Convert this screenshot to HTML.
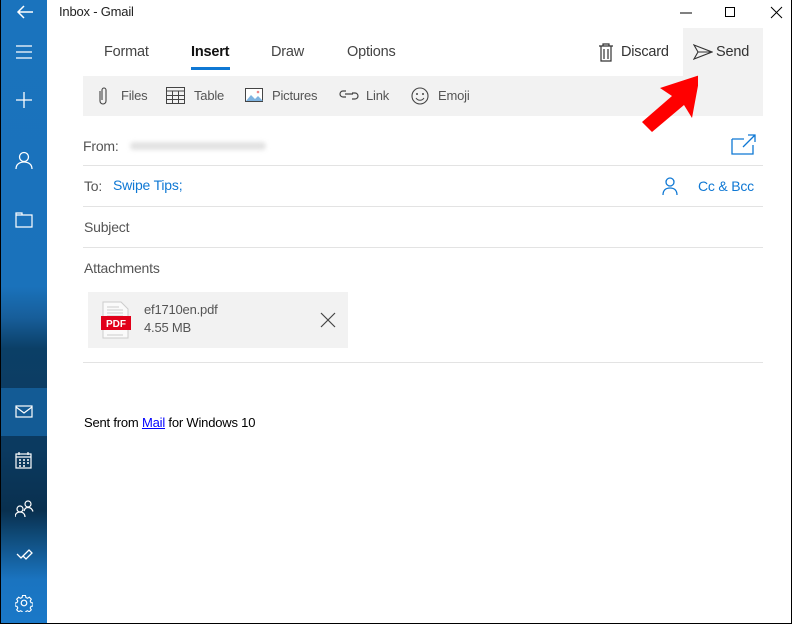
<!DOCTYPE html>
<html><head><meta charset="utf-8"><style>
*{margin:0;padding:0;box-sizing:border-box}
body{width:792px;height:624px;overflow:hidden;background:#fff;font-family:"Segoe UI","Liberation Sans",sans-serif;position:relative}
.side{position:absolute;left:1px;top:0;width:46px;height:623px;background:linear-gradient(180deg,#1a73bd 0%,#1a72bb 46%,#175e9a 51%,#0b3f66 56%,#0c3c63 64%,#0b3a60 72%,#09304f 82%,#0f4a78 86%,#1a74c0 93%,#1a78c8 100%)}
.side .sel{position:absolute;left:0;top:388px;width:46px;height:48px;background:#135b95}
.ic{position:absolute;left:14px}
.a{position:absolute;white-space:nowrap;font-size:14px;color:#222;letter-spacing:-0.2px}
.g{color:#555}
.tab{position:absolute;top:44px;font-size:14.5px;color:#444;letter-spacing:-0.2px}
.bar{position:absolute;left:83px;top:76px;width:680px;height:40px;background:#f2f2f2}
.line{position:absolute;left:83px;width:680px;height:1px;background:#e3e3e3}
.blue{color:#0f78d4}
</style></head><body>
<div style="position:absolute;left:0;top:0;width:1px;height:624px;background:#000"></div>
<div style="position:absolute;right:0;top:0;width:1px;height:624px;background:#000"></div>
<div style="position:absolute;left:0;bottom:0;width:792px;height:1px;background:#000"></div>
<div class="side"><div class="sel"></div>
<svg class="ic" style="top:3px" width="20" height="18" viewBox="0 0 20 18"><path d="M18 9H3M9 3L3 9l6 6" stroke="#fff" stroke-width="1.5" fill="none"/></svg>
<svg class="ic" style="top:44px" width="18" height="16"><path d="M1 2h16M1 8h16M1 14h16" stroke="#fff" stroke-width="1.3"/></svg>
<svg class="ic" style="top:91px" width="18" height="18"><path d="M9 1v16M1 9h16" stroke="#fff" stroke-width="1.3"/></svg>
<svg class="ic" style="top:151px" width="18" height="18"><circle cx="9" cy="6" r="4.5" stroke="#fff" stroke-width="1.3" fill="none"/><path d="M1 18c0-5 4-7 8-7s8 2 8 7" stroke="#fff" stroke-width="1.3" fill="none"/></svg>
<svg class="ic" style="top:212px" width="18" height="16"><path d="M1 1h6v2H1zM1 3h16v12H1z" stroke="#fff" stroke-width="1.2" fill="none"/></svg>
<svg class="ic" style="top:405px" width="18" height="14"><rect x="1" y="1" width="16" height="11" stroke="#fff" stroke-width="1.2" fill="none"/><path d="M1 2l8 6 8-6" stroke="#fff" stroke-width="1.2" fill="none"/></svg>
<svg class="ic" style="top:451px" width="18" height="18"><rect x="1" y="3" width="15" height="14" stroke="#fff" stroke-width="1.2" fill="none"/><path d="M1 6h15M4 1v3M13 1v3" stroke="#fff" stroke-width="1.2"/><path d="M4 9h2M8 9h2M12 9h2M4 12h2M8 12h2M12 12h2M4 15h2M8 15h2" stroke="#fff" stroke-width="1.5"/></svg>
<svg class="ic" style="top:500px" width="20" height="18"><circle cx="5" cy="9" r="3" stroke="#fff" stroke-width="1.2" fill="none"/><path d="M0 17c0-3 2-5 5-5s5 2 5 5" stroke="#fff" stroke-width="1.2" fill="none"/><circle cx="13" cy="4" r="3" stroke="#fff" stroke-width="1.2" fill="none"/><path d="M9 11c1-3 2-3.5 4-3.5s4 1 5 4" stroke="#fff" stroke-width="1.2" fill="none"/></svg>
<svg class="ic" style="top:546px;left:15px" width="18" height="16"><path d="M1 8l4 4 2-2M7 10l6-6 3 3-6 6-3-3" stroke="#fff" stroke-width="1.3" fill="none"/></svg>
<svg class="ic" style="top:594px;left:14px" width="18" height="18" viewBox="0 0 18 18"><circle cx="9" cy="9" r="2.8" stroke="#fff" stroke-width="1.2" fill="none"/><path d="M7.5 1.5h3l.4 2 1.6.8 1.8-1.1 2 2-1.1 1.8.8 1.6 2 .4v3l-2 .4-.8 1.6 1.1 1.8-2 2-1.8-1.1-1.6.8-.4 2h-3l-.4-2-1.6-.8-1.8 1.1-2-2 1.1-1.8-.8-1.6-2-.4v-3l2-.4.8-1.6-1.1-1.8 2-2 1.8 1.1 1.6-.8z" stroke="#fff" stroke-width="1.1" fill="none"/></svg>
</div>
<div class="a" style="left:59px;top:4px;font-size:13px">Inbox - Gmail</div>
<svg style="position:absolute;left:678px;top:6px" width="108" height="14"><path d="M2 7h12" stroke="#000" stroke-width="1"/><rect x="47.5" y="1.5" width="9" height="9" stroke="#000" fill="none"/><path d="M93 1l11 11M104 1L93 12" stroke="#000" stroke-width="1"/></svg>
<div class="tab" style="left:104px">Format</div>
<div class="tab" style="left:191px;color:#111;font-weight:bold">Insert</div>
<div style="position:absolute;left:191px;top:67px;width:39px;height:3px;background:#0f78d4"></div>
<div class="tab" style="left:271px">Draw</div>
<div class="tab" style="left:347px">Options</div>
<svg style="position:absolute;left:598px;top:43px" width="16" height="19"><path d="M1 3h14M5 3V1h6v2M3 3v15h10V3M6 6v10M10 6v10" stroke="#333" stroke-width="1.2" fill="none"/></svg>
<div class="tab" style="left:621px;color:#333">Discard</div>
<div style="position:absolute;left:683px;top:28px;width:80px;height:48px;background:#f2f2f2"></div>
<svg style="position:absolute;left:693px;top:44px" width="20" height="16"><path d="M1 1l18 7-18 7 4-7zM5 8h14" stroke="#333" stroke-width="1.1" fill="none"/></svg>
<div class="tab" style="left:716px;color:#333">Send</div>
<div class="bar"></div>
<svg style="position:absolute;left:97px;top:86px" width="12" height="20"><path d="M3 5v10a3 3 0 006 0V4a2 2 0 00-4 0v10" stroke="#444" stroke-width="1.1" fill="none"/></svg>
<div class="a g" style="left:121px;top:88px;font-size:13px">Files</div>
<svg style="position:absolute;left:166px;top:87px" width="20" height="18"><rect x=".5" y=".5" width="18" height="16" stroke="#444" fill="none"/><path d="M0 4h19M0 8.5h19M0 12.5h19M6.5 4v13M12.5 4v13" stroke="#444"/></svg>
<div class="a g" style="left:194px;top:88px;font-size:13px">Table</div>
<svg style="position:absolute;left:245px;top:88px" width="19" height="15"><rect x=".5" y=".5" width="17" height="13" stroke="#444" fill="#fff"/><path d="M1 13l5-6 4 4 3-3 5 5z" fill="#7fb3e0"/><circle cx="13" cy="4" r="1.3" fill="#e88"/></svg>
<div class="a g" style="left:272px;top:88px;font-size:13px">Pictures</div>
<svg style="position:absolute;left:339px;top:89px" width="20" height="12"><path d="M7 2H4a3 3 0 000 6h3M13 4h3a3 3 0 010 6h-3M6 5h8" stroke="#444" stroke-width="1.2" fill="none"/></svg>
<div class="a g" style="left:366px;top:88px;font-size:13px">Link</div>
<svg style="position:absolute;left:411px;top:87px" width="18" height="18"><circle cx="9" cy="9" r="8" stroke="#444" stroke-width="1.1" fill="none"/><circle cx="6" cy="7" r="1" fill="#444"/><circle cx="12" cy="7" r="1" fill="#444"/><path d="M5 11c2 3 6 3 8 0" stroke="#444" fill="none"/></svg>
<div class="a g" style="left:438px;top:88px;font-size:13px">Emoji</div>
<div class="a g" style="left:83px;top:138px">From:</div>
<div style="position:absolute;left:130px;top:142px;width:136px;height:8px;background:#e2e2e2;border-radius:4px;filter:blur(2px)"></div>
<svg style="position:absolute;left:731px;top:134px" width="25" height="21"><path d="M1 5v15h21V11" stroke="#0f78d4" stroke-width="1.3" fill="none"/><path d="M1 5h12M12 13L24 1M17 1h7v7" stroke="#0f78d4" stroke-width="1.3" fill="none"/></svg>
<div class="line" style="top:165px"></div>
<div class="a g" style="left:84px;top:178px">To:</div>
<div class="a blue" style="left:113px;top:177px">Swipe Tips;</div>
<svg style="position:absolute;left:662px;top:177px" width="16" height="18"><circle cx="8" cy="5" r="4" stroke="#0f78d4" stroke-width="1.3" fill="none"/><path d="M1 18c0-5 3-7 7-7s7 2 7 7" stroke="#0f78d4" stroke-width="1.3" fill="none"/></svg>
<div class="a blue" style="left:698px;top:178px">Cc &amp; Bcc</div>
<div class="line" style="top:206px"></div>
<div class="a g" style="left:84px;top:219px">Subject</div>
<div class="line" style="top:247px"></div>
<div class="a g" style="left:84px;top:260px">Attachments</div>
<div style="position:absolute;left:88px;top:292px;width:260px;height:56px;background:#f2f2f2"></div>
<svg style="position:absolute;left:100px;top:301px" width="32" height="38"><path d="M3 1h18l7 7v29H3z" fill="#fafafa" stroke="#ccc"/><path d="M7 6h12M7 9h16M7 12h16M7 15h16M7 34h16" stroke="#ccc"/><rect x="1" y="15" width="30" height="14" fill="#e1001a"/><text x="16" y="26" fill="#fff" font-size="10" font-weight="bold" text-anchor="middle" font-family="Liberation Sans">PDF</text></svg>
<div class="a g" style="left:144px;top:302px;font-size:13px">ef1710en.pdf</div>
<div class="a g" style="left:144px;top:320px;font-size:13px">4.55 MB</div>
<svg style="position:absolute;left:320px;top:312px" width="16" height="16"><path d="M1 1l14 14M15 1L1 15" stroke="#444" stroke-width="1.2"/></svg>
<div class="line" style="top:362px"></div>
<div class="a" style="left:84px;top:415px;font-size:13px;color:#000">Sent from <span style="color:#00f;text-decoration:underline">Mail</span> for Windows 10</div>
<svg style="position:absolute;left:638px;top:72px" width="60" height="60"><polygon points="62,3 54,46 46,33 14,60 4,50 34,24 22,16" fill="#f00"/></svg>
</body></html>
